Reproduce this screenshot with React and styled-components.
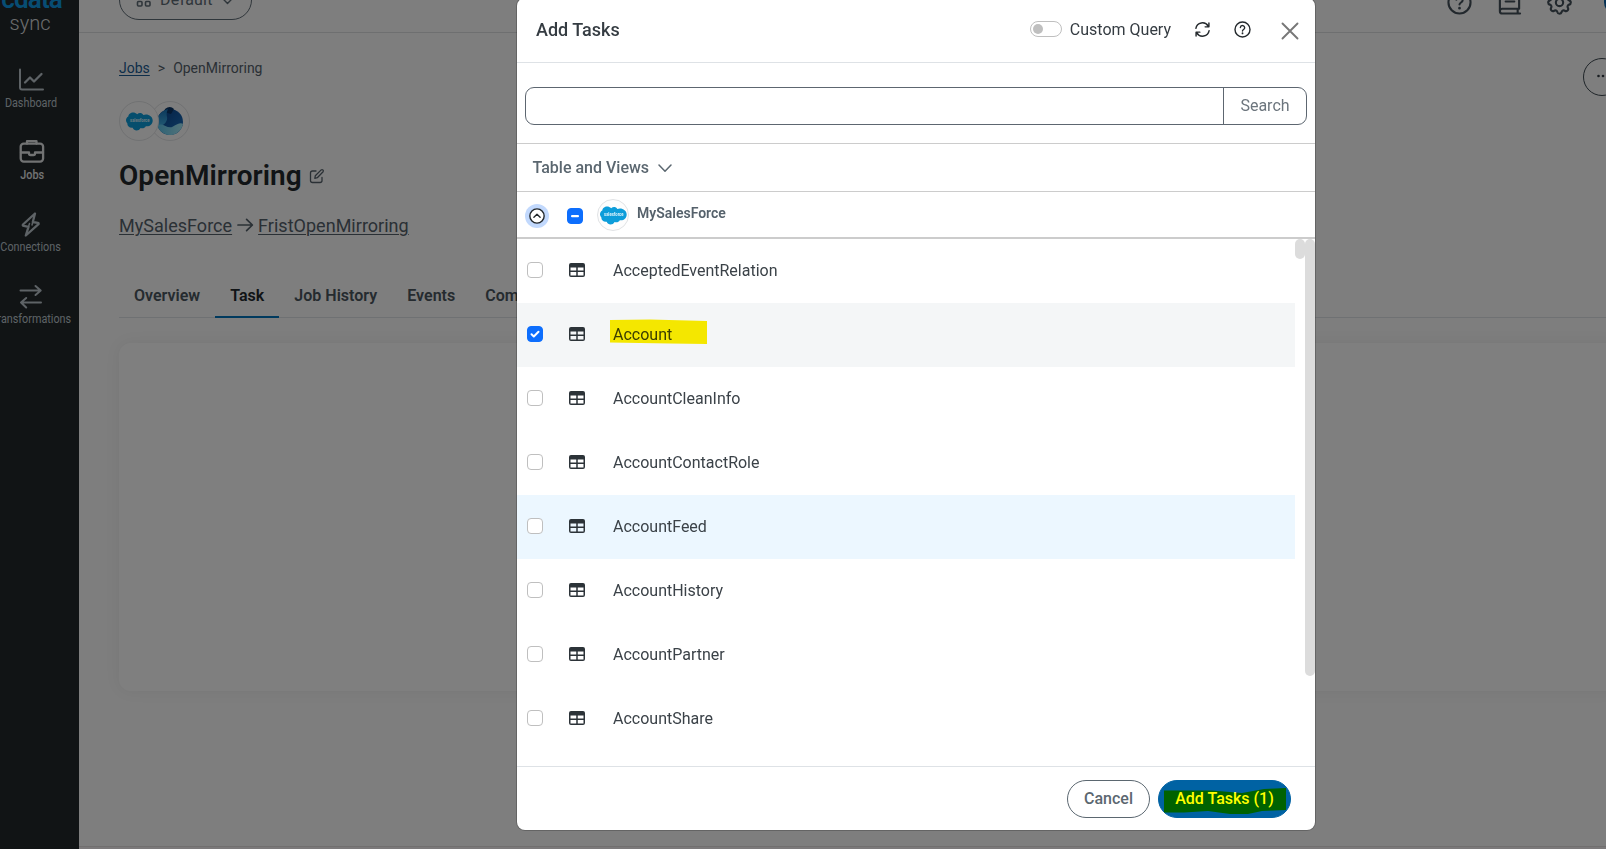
import React from "react";
import styled, { createGlobalStyle } from "styled-components";

const GlobalStyle = createGlobalStyle`
  *, *::before, *::after { box-sizing: border-box; }
  html, body { margin: 0; padding: 0; overflow: hidden; }
  body {
    font-family: Roboto, "Liberation Sans", sans-serif;
    font-size: 16px;
    color: #353c42;
    background: #fcfcfc;
  }
  svg { display: block; flex: none; }
`;

const Page = styled.div`
  display: flex;
  width: 1606px;
  height: 849px;
  overflow: hidden;
  position: relative;
`;

/* ---------- Sidebar ---------- */
const Sidebar = styled.nav`
  width: 79px;
  flex: none;
  height: 849px;
  background: #22282b;
  overflow: hidden;
`;

const Brand = styled.div`
  height: 68px;
  overflow: hidden;
  display: flex;
  flex-direction: column;
`;

const BrandName = styled.div`
  height: 9px;
  width: 62px;
  flex: none;
  display: flex;
  align-items: flex-end;
  justify-content: flex-end;
  overflow: hidden;
  font: 600 26px/19px Roboto, sans-serif;
  letter-spacing: -0.8px;
  color: #0f9ae6;
`;

const BrandProduct = styled.div`
  width: 60px;
  text-align: center;
  font: 300 20px/24px Roboto, sans-serif;
  color: #d8dadb;
  margin-top: 2px;
`;

const NavItem = styled.a`
  width: 79px;
  height: 72px;
  padding-right: ${(p) => p.$pull || 17}px;
  display: flex;
  flex-direction: column;
  align-items: center;
  font-size: 12px;
  line-height: 16px;
  font-weight: ${(p) => (p.$active ? 500 : 400)};
  color: ${(p) => (p.$active ? "#e4e6e7" : "#bcc6cc")};
  span { white-space: nowrap; transform: scaleX(0.9); margin-top: 1px; }
`;

/* ---------- Main area ---------- */
const Main = styled.main`
  flex: 1;
  min-width: 0;
  display: flex;
  flex-direction: column;
`;

const TopBar = styled.header`
  height: 33px;
  flex: none;
  border-bottom: 1px solid #dcdfe1;
  display: flex;
  align-items: flex-end;
  justify-content: space-between;
  padding: 0 0 12px 40px;
  overflow: hidden;
`;

const WorkspacePill = styled.button`
  width: 133px;
  height: 40px;
  flex: none;
  border: 1px solid #5f6c76;
  border-radius: 20px;
  background: transparent;
  display: flex;
  align-items: center;
  padding: 0 16px;
  gap: 8px;
  font: 400 16px/20px Roboto, sans-serif;
  letter-spacing: 0.2px;
  color: #5f6c76;
`;

const TopIcons = styled.div`
  display: flex;
  align-items: center;
  gap: 25px;
  height: 26px;
  margin-bottom: 5px;
  margin-right: -22px;
  color: #44505a;
`;

const Avatar = styled.div`
  width: 24px;
  height: 24px;
  border-radius: 12px;
  margin-left: 7px;
  background: #0a63a8;
`;

const Content = styled.section`
  padding: 24px 0 0 40px;
  flex: 1;
  min-height: 0;
  display: flex;
  flex-direction: column;
`;

const HeadRow = styled.div`
  display: flex;
  justify-content: space-between;
  height: 44px;
`;

const Crumbs = styled.div`
  display: flex;
  gap: 8px;
  font-size: 14px;
  line-height: 22px;
  color: #55616b;
  a { color: #1b5c94; text-decoration: underline; text-underline-offset: 2px; }
`;

const MoreButton = styled.button`
  width: 38px;
  height: 38px;
  margin-right: -15px;
  margin-top: 1px;
  border: 1px solid #3f4a52;
  border-radius: 19px;
  background: transparent;
  display: flex;
  align-items: center;
  justify-content: center;
  padding: 0 0 2px 2px;
  color: #343d44;
`;

const ConnectorPair = styled.div`
  display: flex;
  height: 40px;
  isolation: isolate;
`;

const ConnectorBadge = styled.div`
  width: ${(p) => p.$size}px;
  height: ${(p) => p.$size}px;
  flex: none;
  border-radius: 50%;
  border: 1px solid #e1e3e5;
  background: #fdfdfd;
  display: flex;
  align-items: center;
  justify-content: center;
  position: relative;
  z-index: ${(p) => p.$level || 0};
  margin-left: ${(p) => p.$overlap || 0}px;
`;

const Title = styled.h1`
  margin: 14px 0 0;
  height: 42px;
  display: flex;
  align-items: center;
  gap: 7px;
  font-size: 28px;
  line-height: 42px;
  font-weight: 600;
  letter-spacing: 0.05px;
  color: #22282c;
  svg { color: #55616b; }
`;

const Route = styled.div`
  margin-top: 15px;
  height: 27px;
  display: flex;
  align-items: center;
  gap: 4.5px;
  font-size: 18px;
  line-height: 27px;
  letter-spacing: 0.02px;
  color: #55616b;
  a { text-decoration: underline; text-underline-offset: 2px; text-decoration-thickness: 1px; }
`;

const Tabs = styled.div`
  margin-top: 37px;
  height: 42px;
  flex: none;
  display: flex;
  border-bottom: 1px solid #dfe3e6;
`;

const Tab = styled.div`
  padding: 8px 15px 0;
  height: 42px;
  line-height: 24px;
  font-weight: 600;
  letter-spacing: 0.02px;
  color: ${(p) => (p.$active ? "#22282c" : "#4b565f")};
  border-bottom: 2px solid ${(p) => (p.$active ? "#0075bd" : "transparent")};
`;

const Card = styled.div`
  margin-top: 25px;
  height: 348px;
  flex: none;
  border-radius: 12px;
  margin-right: -20px;
  background: #ffffff;
  box-shadow: 0 0 16px rgba(0, 0, 0, 0.06);
`;

const FootLine = styled.div`
  height: 3px;
  flex: none;
  border-top: 1px solid #e2dede;
  background: #f6f3f4;
`;

/* ---------- Modal ---------- */
const Backdrop = styled.div`
  position: absolute;
  inset: 0;
  z-index: 10;
  background: rgba(0, 0, 0, 0.5);
`;

const Modal = styled.div`
  position: absolute;
  z-index: 11;
  left: 517px;
  top: -2px;
  width: 798px;
  height: 832px;
  border-radius: 8px;
  background: #ffffff;
  overflow: hidden;
  display: flex;
  flex-direction: column;
  box-shadow: 0 0 0 1px rgba(0, 0, 0, 0.2);
`;

const ModalHeader = styled.div`
  height: 65px;
  flex: none;
  border-bottom: 1px solid #dee2e6;
  display: flex;
  align-items: center;
  padding: 0 16px 1px 19px;
`;

const ModalTitle = styled.h2`
  margin: 0;
  flex: 1;
  font-size: 18px;
  line-height: 24px;
  font-weight: 500;
  color: #353c42;
`;

const Toggle = styled.div`
  width: 32px;
  height: 16px;
  border: 1px solid #bfbfbf;
  border-radius: 8px;
  padding: 2px;
  margin-right: 8px;
  margin-bottom: 1px;
  &::before {
    content: "";
    display: block;
    width: 10px;
    height: 10px;
    border-radius: 5px;
    background: #bfbfbf;
  }
`;

const HeaderActions = styled.div`
  display: flex;
  align-items: center;
  color: #24292d;
  margin-left: 23px;
  gap: 23px;
  svg:last-child { color: #777; margin-left: 7px; margin-top: 2px; }
`;

const SearchArea = styled.div`
  height: 81px;
  flex: none;
  padding: 24px 8px 0;
  border-bottom: 1px solid #ccc;
`;

const SearchGroup = styled.div`
  height: 38px;
  border: 1px solid #5d6670;
  border-radius: 9px;
  display: flex;
  justify-content: flex-end;
`;

const SearchButton = styled.button`
  width: 83px;
  border: 0;
  border-left: 1px solid #5d6670;
  background: transparent;
  font: 400 16px/34px Roboto, sans-serif;
  color: #6c757d;
  padding: 0;
`;

const FilterRow = styled.div`
  height: 48px;
  flex: none;
  border-bottom: 1px solid #ccc;
  padding: 0 15.5px;
  display: flex;
  align-items: center;
  gap: 8.5px;
  font-weight: 500;
  color: #5b6770;
`;

const SourceRow = styled.div`
  height: 47px;
  flex: none;
  border-bottom: 2px solid #ccc;
  padding-left: 8px;
  display: flex;
  align-items: center;
  padding-top: 1px;
`;

const Collapse = styled.div`
  width: 24px;
  height: 24px;
  border-radius: 12px;
  background: #c2d9fd;
  display: flex;
  align-items: center;
  justify-content: center;
  color: #22282c;
  margin-top: 1px;
`;

const SourceName = styled.div`
  font-size: 14px;
  line-height: 20px;
  font-weight: 600;
  color: #55616b;
  margin-left: 8px;
  margin-bottom: 4px;
`;

const Check = styled.div`
  width: 16px;
  height: 16px;
  flex: none;
  border-radius: 4px;
  border: 1px solid ${(p) => (p.$on ? "#0d6efd" : "#bfbfbf")};
  background: ${(p) => (p.$on ? "#0d6efd" : "#fff")};
  display: flex;
  align-items: center;
  justify-content: center;
  margin: ${(p) => p.$margin || "0"};
`;

const ListArea = styled.div`
  height: 527px;
  flex: none;
  display: flex;
`;

const List = styled.div`
  flex: 1;
`;

const Row = styled.div`
  height: 64px;
  padding-left: 10px;
  display: flex;
  align-items: center;
  background: ${(p) => (p.$tone === "selected" ? "#f4f6f7" : p.$tone === "hover" ? "#ecf7ff" : "#fff")};
  > svg { margin: 0 28px 2px 26px; color: #2c3338; }
`;

const Label = styled.div`
  position: relative;
  line-height: 24px;
  color: #3b4248;
`;

const Marker = styled.svg`
  position: absolute;
  left: ${(p) => p.$left}px;
  top: ${(p) => p.$top}px;
  mix-blend-mode: multiply;
`;

const ScrollThumb = styled.div`
  width: 10px;
  height: ${(p) => p.$length}px;
  border-radius: 5px;
  background: #dcdcdc;
`;

const ModalFooter = styled.div`
  flex: 1;
  border-top: 1px solid #dee2e6;
  display: flex;
  justify-content: flex-end;
  padding: 13px 24px 0;
  gap: 8px;
`;

const PillButton = styled.button`
  position: relative;
  height: 38px;
  width: ${(p) => p.$width}px;
  padding: 0;
  border-radius: 19px;
  border: 1px solid ${(p) => (p.$primary ? "#0062a3" : "#5b6770")};
  background: ${(p) => (p.$primary ? "#0062a3" : "#fff")};
  color: ${(p) => (p.$primary ? "#fff" : "#5b6770")};
  font: 500 16px/34px Roboto, sans-serif;
`;

/* ---------- Drawings ---------- */
const Icon = ({ size = 24, box = 24, stroke = 2, children }) => (
  <svg width={size} height={size} viewBox={`0 0 ${box} ${box}`} fill="none" stroke="currentColor"
    strokeWidth={stroke} strokeLinecap="round" strokeLinejoin="round">
    {children}
  </svg>
);

const ChartIcon = () => (
  <Icon size={26} box={26}>
    <path d="M2 1.5V19.5Q2 21.5 4 21.5H25" />
    <path d="M7 14.5L12 9.5L16 13.5L23.5 6" strokeWidth="2.3" />
  </Icon>
);
const BriefcaseIcon = () => (
  <Icon size={26} box={26} stroke={2.3}>
    <rect x="1.7" y="3.6" width="22.4" height="18" rx="3" />
    <path d="M8 3.5V1.2H17.5V3.5M2 12.5H10V13.5Q10 15 11.5 15H14.5Q16 15 16 13.5V12.5H24" />
  </Icon>
);
const BoltIcon = () => (
  <Icon size={26} box={26} stroke={2.3}>
    <path d="M17 1.5L5 12.5Q4.2 13.6 5.8 13.8L10.5 14.8L7.8 23.5L20.5 12.2Q21 11 19.8 10.8L14.8 10Z" />
    <path d="M14.8 10L14 13M10.5 14.8L11.5 11.5" strokeWidth="1.5" />
  </Icon>
);
const SwapIcon = () => (
  <Icon size={26} box={26}>
    <path d="M2.5 6.5H22.5M17.5 2L22.7 6.5L17.5 11M23 18.5H3M8.2 14L3 18.5L8.2 23.5" />
  </Icon>
);
const HelpIcon = ({ size, stroke }) => (
  <Icon size={size} stroke={stroke}>
    <circle cx="12" cy="12" r="10.6" />
    <path d="M9 9.2A3 3 0 0 1 15 9.8C15 12 12 12 12 14" />
    <path d="M12 17.3V17.5" strokeWidth={stroke * 1.25} />
  </Icon>
);
const BookIcon = () => (
  <Icon size={25} box={26} stroke={2.2}>
    <path d="M23 19.5H5.5A2.5 2.5 0 0 0 5.5 24.5H24M3 22V4Q3 1.5 5.5 1.5H21Q23 1.5 23 4V19.5M21.5 20V24M9 7H17M9 12H18" />
  </Icon>
);
const GearIcon = () => (
  <Icon size={25} stroke={2}>
    <path d="M10.3 4.3c.4-1.7 2.9-1.7 3.4 0a1.7 1.7 0 0 0 2.6 1.1c1.5-1 3.3.8 2.4 2.4a1.7 1.7 0 0 0 1 2.5c1.8.5 1.8 2.9 0 3.4a1.7 1.7 0 0 0-1 2.5c.9 1.6-.9 3.3-2.4 2.4a1.7 1.7 0 0 0-2.6 1.1c-.5 1.7-3 1.7-3.4 0a1.7 1.7 0 0 0-2.6-1.1c-1.5.9-3.3-.8-2.4-2.4a1.7 1.7 0 0 0-1-2.5c-1.8-.5-1.8-2.9 0-3.4a1.7 1.7 0 0 0 1-2.5c-.9-1.6.9-3.4 2.4-2.4a1.7 1.7 0 0 0 2.6-1.1z"
      transform="translate(12 12) scale(1.2) translate(-12 -12)" strokeWidth="1.7" />
    <circle cx="12" cy="12" r="3.5" />
  </Icon>
);
const GridIcon = () => (
  <Icon size={16} box={16} stroke={1.6}>
    <rect x="1.5" y="1.5" width="4.5" height="4.5" rx="1" />
    <rect x="9.5" y="1.5" width="4.5" height="4.5" rx="1" />
    <rect x="1.5" y="9.5" width="4.5" height="4.5" rx="1" />
    <rect x="9.5" y="9.5" width="4.5" height="4.5" rx="1" />
  </Icon>
);
const ChevronDown = ({ size = 14 }) => (
  <Icon size={size} box={14} stroke={1.5}>
    <path d="M1 4L7 10.3L13 4" />
  </Icon>
);
const EditIcon = () => (
  <Icon size={16} box={16} stroke={1.3}>
    <path d="M7 3H3.5Q1.5 3 1.5 5V12.7Q1.5 14.5 3.5 14.5H11Q13 14.5 13 12.7V9.5" />
    <path d="M5.8 10.4L6.3 7.8L12.2 1.9Q13 1.2 13.9 1.9Q14.8 2.8 14.1 3.7L8.3 9.7Z" />
  </Icon>
);
const ArrowIcon = () => (
  <Icon size={17} box={17} stroke={1.7}>
    <path d="M1 8H15.3M9.6 2.3L15.4 8L9.6 13.7" />
  </Icon>
);
const RefreshIcon = () => (
  <Icon size={17} box={18} stroke={1.5}>
    <path d="M2 7.8A7 7 0 0 1 15 5.5M15.8 2.2V6.2H11.8M16 10.2A7 7 0 0 1 3 12.5M2.2 15.8V11.8H6.2" />
  </Icon>
);
const CloseIcon = () => (
  <Icon size={18} box={18} stroke={1.9}>
    <path d="M1.5 1.5L16.5 16.5M16.5 1.5L1.5 16.5" />
  </Icon>
);
const TableIcon = () => (
  <svg width="16" height="14" viewBox="0 0 16 14">
    <path fillRule="evenodd" fill="currentColor"
      d="M2 0H14Q16 0 16 2V12Q16 14 14 14H2Q0 14 0 12V2Q0 0 2 0ZM1.5 4.5V7.5H7.25V4.5ZM8.75 4.5V7.5H14.5V4.5ZM1.5 9V12.5H7.25V9ZM8.75 9V12.5H14.5V9Z" />
  </svg>
);
const CloudName = styled.text`
  font: 700 5.2px Roboto, sans-serif;
  fill: #dff3fc;
`;
const SalesforceLogo = () => (
  <svg width="27" height="19" viewBox="0 0 27 19">
    <path fill="#0d9dda" d="M11.2 2.2C13 .4 16 .6 17.3 3C21 1.2 26.7 3.6 26.7 8.6C26.7 13 22.8 15 19.8 14.2C18.7 16.2 16.5 16.8 14.6 15.9C13 19.2 8 19.4 6.7 15.7C3.5 16.2 1.2 14 1.3 11.3C-1 9 0 5.6 2.3 4.6C2.2 1.2 7.6-1.5 11.2 2.2Z" />
    <CloudName x="4" y="10.4" textLength="19.5" lengthAdjust="spacingAndGlyphs">salesforce</CloudName>
  </svg>
);
const LakeLogo = () => (
  <svg width="28" height="30" viewBox="0 0 28 30">
    <defs>
      <linearGradient id="lakeDeep" x1="0" y1="0" x2="1" y2="1">
        <stop offset="0" stopColor="#0a3f87" />
        <stop offset="1" stopColor="#1a74c4" />
      </linearGradient>
      <linearGradient id="lakeSide" x1="0" y1="0" x2="0" y2="1">
        <stop offset="0" stopColor="#1672b8" />
        <stop offset="1" stopColor="#45b3e6" />
      </linearGradient>
      <linearGradient id="lakeFoam" x1="0" y1="0" x2="1" y2="0">
        <stop offset="0" stopColor="#5cc4ea" />
        <stop offset="1" stopColor="#a5e8f5" />
      </linearGradient>
    </defs>
    <circle cx="14" cy="16" r="13" fill="url(#lakeDeep)" />
    <path fill="#0a3566" d="M9 3Q14-1 18 3L15 8L8 6Z" />
    <path fill="url(#lakeSide)" d="M9 4C2 8-1 14 2 21C8 20 12 15 11 11Q10 7 12 3Z" />
    <path fill="url(#lakeFoam)" d="M1.5 20C7 15 11 24 17 20.5C21 18 25 16 27 18C25 26 19 29.5 13 29C8 28.5 3 25 1.5 20Z" />
  </svg>
);

const tables = [
  { name: "AcceptedEventRelation" },
  { name: "Account", tone: "selected", checked: true },
  { name: "AccountCleanInfo" },
  { name: "AccountContactRole" },
  { name: "AccountFeed", tone: "hover" },
  { name: "AccountHistory" },
  { name: "AccountPartner" },
  { name: "AccountShare" },
];

export default function App() {
  return (
    <Page>
      <GlobalStyle />
      <Sidebar>
        <Brand>
          <BrandName>cdata</BrandName>
          <BrandProduct>sync</BrandProduct>
        </Brand>
        <NavItem><ChartIcon /><span>Dashboard</span></NavItem>
        <NavItem $active $pull={15}><BriefcaseIcon /><span>Jobs</span></NavItem>
        <NavItem><BoltIcon /><span>Connections</span></NavItem>
        <NavItem><SwapIcon /><span>Transformations</span></NavItem>
      </Sidebar>

      <Main>
        <TopBar>
          <WorkspacePill><GridIcon />Default<ChevronDown size={13} /></WorkspacePill>
          <TopIcons>
            <HelpIcon size={25} stroke={2} />
            <BookIcon />
            <GearIcon />
            <Avatar />
          </TopIcons>
        </TopBar>
        <Content>
          <HeadRow>
            <Crumbs><a>Jobs</a><span>&gt;</span><span>OpenMirroring</span></Crumbs>
            <MoreButton>
              <svg width="12" height="4" viewBox="0 0 12 4" fill="currentColor">
                <circle cx="1.5" cy="2" r="1.3" /><circle cx="6" cy="2" r="1.3" /><circle cx="10.5" cy="2" r="1.3" />
              </svg>
            </MoreButton>
          </HeadRow>
          <ConnectorPair>
            <ConnectorBadge $size={40} $level={1}><SalesforceLogo /></ConnectorBadge>
            <ConnectorBadge $size={40} $overlap={-9}><LakeLogo /></ConnectorBadge>
          </ConnectorPair>
          <Title>OpenMirroring<EditIcon /></Title>
          <Route><a>MySalesForce</a><ArrowIcon /><a>FristOpenMirroring</a></Route>
          <Tabs>
            <Tab>Overview</Tab>
            <Tab $active>Task</Tab>
            <Tab>Job History</Tab>
            <Tab>Events</Tab>
            <Tab>Com</Tab>
          </Tabs>
          <Card />
        </Content>
        <FootLine />
      </Main>

      <Backdrop />

      <Modal>
        <ModalHeader>
          <ModalTitle>Add Tasks</ModalTitle>
          <Toggle />
          <span>Custom Query</span>
          <HeaderActions>
            <RefreshIcon />
            <HelpIcon size={17} stroke={2} />
            <CloseIcon />
          </HeaderActions>
        </ModalHeader>
        <SearchArea>
          <SearchGroup><SearchButton>Search</SearchButton></SearchGroup>
        </SearchArea>
        <FilterRow>Table and Views<ChevronDown /></FilterRow>
        <SourceRow>
          <Collapse>
            <Icon size={16} box={17} stroke={1.5}>
              <circle cx="8.5" cy="8.5" r="7.6" fill="#fff" />
              <path d="M5.2 9.8L8.5 6.7L11.8 9.8" />
            </Icon>
          </Collapse>
          <Check $on $margin="2px 14px 0 18px">
            <svg width="10" height="4" viewBox="0 0 10 4"><rect x="1" y="1" width="8" height="2.2" rx="1" fill="#fff" /></svg>
          </Check>
          <ConnectorBadge $size={32}><SalesforceLogo /></ConnectorBadge>
          <SourceName>MySalesForce</SourceName>
        </SourceRow>
        <ListArea>
          <List>
            {tables.map((t) => (
              <Row key={t.name} $tone={t.tone}>
                <Check $on={t.checked} $margin="0 0 2px">
                  {t.checked && (
                    <Icon size={12} box={12} stroke={2}><path d="M2.5 6.3L4.8 8.5L9.5 3.8" stroke="#fff" /></Icon>
                  )}
                </Check>
                <TableIcon />
                <Label>
                  {t.name}
                  {t.checked && (
                    <Marker $left={-3} $top={-4} width="98" height="26" viewBox="0 0 98 26">
                      <path fill="#fff000" d="M0 1L40 .5L97 2V25L60 24.5L0 23.5Z" />
                    </Marker>
                  )}
                </Label>
              </Row>
            ))}
          </List>
          <ScrollThumb $length={20} />
          <ScrollThumb $length={437} />
        </ListArea>
        <ModalFooter>
          <PillButton $width={83}>Cancel</PillButton>
          <PillButton $primary $width={133}>
            Add Tasks (1)
            <Marker $left={5} $top={6} width="124" height="30" viewBox="0 0 124 30">
              <path fill="#ffff00" d="M0 3.5L48 3.5L78 6L100 2L122 1V23L98 24L84 27H66L44 24L20 25.5H0Z" />
            </Marker>
          </PillButton>
        </ModalFooter>
      </Modal>
    </Page>
  );
}
